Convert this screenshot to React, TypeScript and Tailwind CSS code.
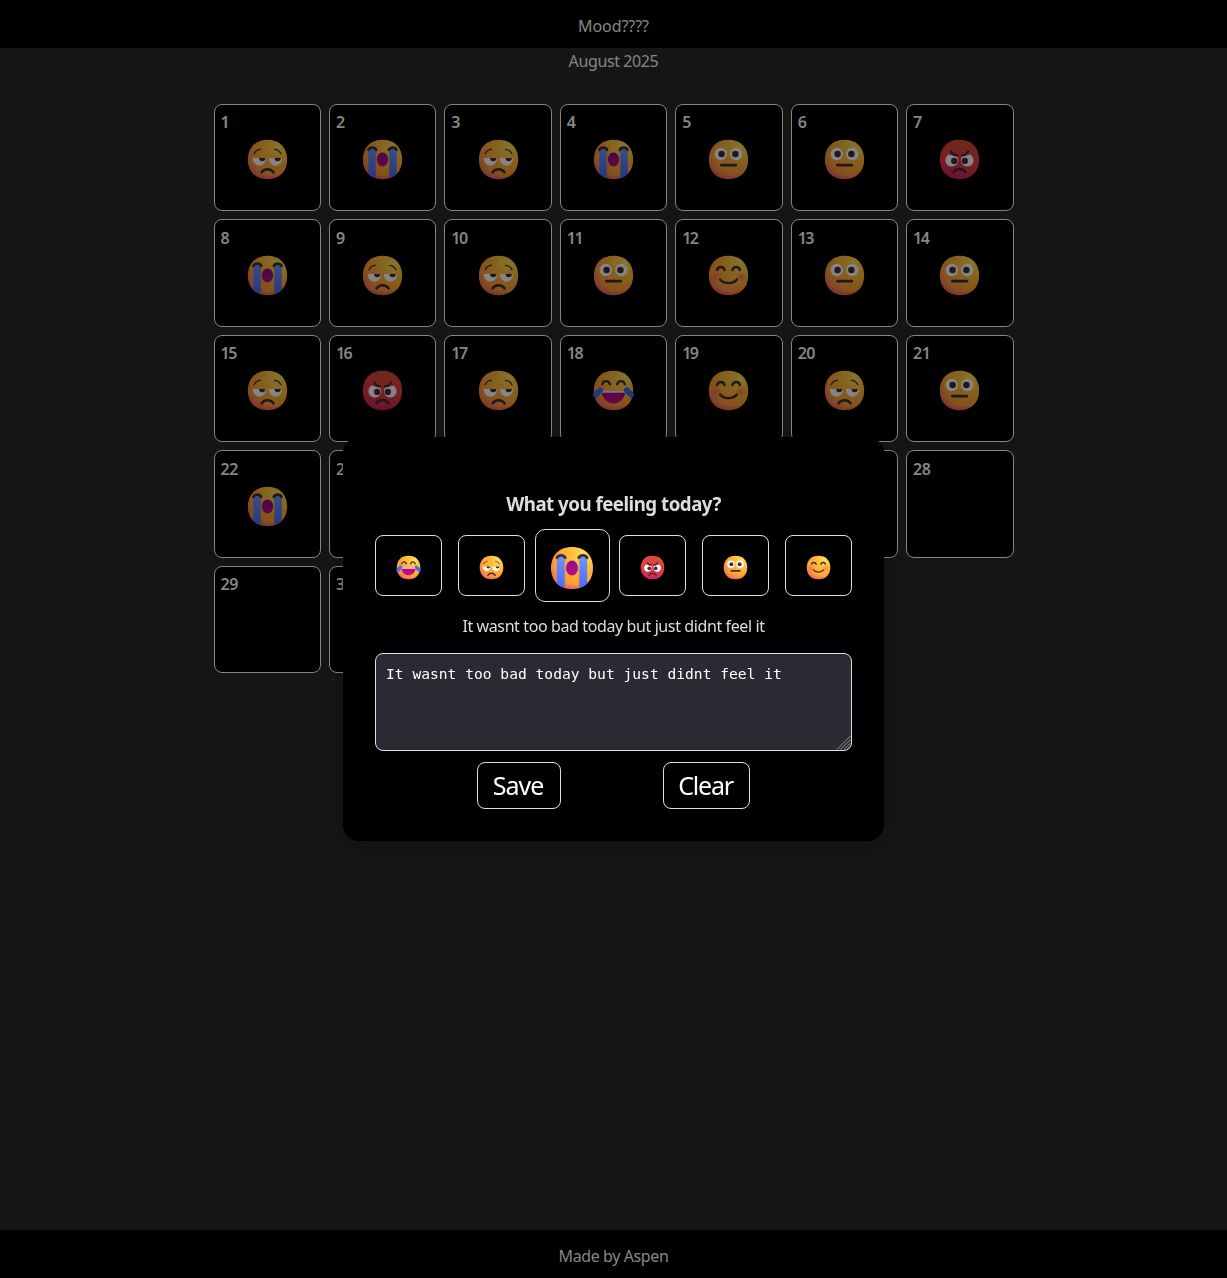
import { useState } from "react";

type Mood = "joy" | "meh" | "cry" | "mad" | "flat" | "happy";

const INK = "#432b3d";
const HEAD = "M16 2C24.6 2 30 7.6 30 16S24.6 30 16 30 2 24.4 2 16 7.4 2 16 2Z";

function Face({ mood, className }: { mood: Mood; className?: string }) {
  const mad = mood === "mad";
  return (
    <svg viewBox="0 0 32 32" className={className} fill="none" strokeLinecap="round" strokeLinejoin="round">
      <defs>
        <radialGradient id="sunny" gradientUnits="userSpaceOnUse" cx="24" cy="7" r="26">
          <stop offset="0" stopColor="#ffe055" />
          <stop offset="0.4" stopColor="#ffbb38" />
          <stop offset="0.8" stopColor="#ff9c36" />
          <stop offset="1" stopColor="#f0745a" />
        </radialGradient>
        <radialGradient id="blush" gradientUnits="userSpaceOnUse" cx="17" cy="6" r="25">
          <stop offset="0.84" stopColor="#e8487c" stopOpacity="0" />
          <stop offset="1" stopColor="#e8487c" stopOpacity="0.75" />
        </radialGradient>
        <linearGradient id="rage" x1="20" y1="2" x2="14" y2="30" gradientUnits="userSpaceOnUse">
          <stop offset="0" stopColor="#d94f35" />
          <stop offset="0.6" stopColor="#e63a44" />
          <stop offset="1" stopColor="#cc2260" />
        </linearGradient>
        <linearGradient id="maw" x1="0" y1="11" x2="0" y2="25" gradientUnits="userSpaceOnUse">
          <stop offset="0" stopColor="#8d0d8b" />
          <stop offset="1" stopColor="#cf0b80" />
        </linearGradient>
        <linearGradient id="stream" x1="0" y1="9" x2="0" y2="30" gradientUnits="userSpaceOnUse">
          <stop offset="0" stopColor="#6c93ff" />
          <stop offset="1" stopColor="#4a68ff" />
        </linearGradient>
        <radialGradient id="cheek">
          <stop offset="0" stopColor="#ff5a50" stopOpacity="0.65" />
          <stop offset="1" stopColor="#ff5a50" stopOpacity="0" />
        </radialGradient>
        <clipPath id="head">
          <path d={HEAD} />
        </clipPath>
      </defs>
      <path d={HEAD} fill={mad ? "url(#rage)" : "url(#sunny)"} />
      {!mad && <path d={HEAD} fill="url(#blush)" />}

      {mood === "meh" && (
        <>
          <path d="M6.5 11.8C7.4 10 9 8.9 11 8.8M25.5 11.8C24.6 10 23 8.9 21 8.8" stroke={INK} strokeWidth="0.9" />
          <path d="M5.5 14.9H15C15 18 12.9 20.3 10.3 20.3S5.5 18 5.5 14.9ZM17 14.9H26.4C26.4 18 24.3 20.3 21.7 20.3S17 18 17 14.9Z" fill="#fff" />
          <path d="M10 14.9H14.5C14.5 16.3 13.5 17.3 12.2 17.3S10 16.3 10 14.9ZM21 14.9H25.5C25.5 16.3 24.5 17.3 23.2 17.3S21 16.3 21 14.9Z" fill={INK} />
          <path d="M11.8 25.2C13.4 22.1 18.6 22.1 20.3 25.2" stroke={INK} strokeWidth="1.8" />
        </>
      )}

      {mood === "cry" && (
        <>
          <g clipPath="url(#head)">
            <path d="M11 10H11.6V30H11ZM20.4 10H21V30H20.4Z" fill="#d86a25" fillOpacity="0.4" />
            <path d="M5.9 8.6H11.1V30H5.9ZM20.9 8.6H26.1V30H20.9Z" fill="url(#stream)" />
          </g>
          <path d="M6 9.1C7 7.1 10.4 7 11.5 9.1M20.5 9.1C21.6 7 25 7.1 26 9.1" stroke={INK} strokeWidth="1.9" />
          <ellipse cx="16" cy="16" rx="4" ry="5" fill="url(#maw)" />
        </>
      )}

      {mood === "flat" && (
        <>
          <circle cx="10.5" cy="12.1" r="4.4" fill="#fff" />
          <circle cx="21.5" cy="12.1" r="4.4" fill="#fff" />
          <circle cx="11.1" cy="12.1" r="2.3" fill={INK} />
          <circle cx="20.9" cy="12.1" r="2.3" fill={INK} />
          <path d="M11 20H21.2" stroke={INK} strokeWidth="1.9" />
        </>
      )}

      {mood === "mad" && (
        <>
          <path d="M8.3 12.4L14.5 14.2C15.8 18 13.6 21 10.6 21 8 21 6 19.1 6 16.6 6 14.8 7 13.2 8.3 12.4ZM23.7 12.4L17.5 14.2C16.2 18 18.4 21 21.4 21 24 21 26 19.1 26 16.6 26 14.8 25 13.2 23.7 12.4Z" fill="#fff" />
          <circle cx="12.2" cy="17" r="2.2" fill={INK} />
          <circle cx="19.8" cy="17" r="2.2" fill={INK} />
          <path d="M10 10.1C10.7 12 12.2 13 14.3 13M22 10.1C21.3 12 19.8 13 17.7 13" stroke={INK} strokeWidth="1.5" />
          <path d="M11.7 25.1C13.4 22 18.6 22 20.3 25.1" stroke={INK} strokeWidth="1.8" />
        </>
      )}

      {mood === "happy" && (
        <>
          <circle cx="7" cy="17" r="4" fill="url(#cheek)" />
          <circle cx="25" cy="17" r="4" fill="url(#cheek)" />
          <path d="M7.9 12.1C8.5 9.3 12.5 9.3 13.2 12.1M18.8 12.1C19.5 9.3 23.5 9.3 24.1 12.1" stroke={INK} strokeWidth="1.7" />
          <path d="M10 18.9C12.5 22.3 19.5 22.3 22 18.9" stroke={INK} strokeWidth="1.7" />
        </>
      )}

      {mood === "joy" && (
        <>
          <path d="M8 11.6C8.6 8.5 12.7 8.5 13.4 11.6M18.6 11.6C19.3 8.5 23.4 8.5 24 11.6" stroke={INK} strokeWidth="1.6" />
          <path d="M7.6 16.2H24.4C24.4 21.5 20.6 25.2 16 25.2S7.6 21.5 7.6 16.2Z" fill="url(#maw)" />
          <path d="M7.6 16H24.4L24.2 17.6H7.8Z" fill="#f3dff0" />
          <path d="M6.6 15.8L3.4 19M25.4 15.8L28.6 19" stroke="#3e6cf2" strokeWidth="4" />
        </>
      )}
    </svg>
  );
}

const entries: Mood[] = [
  "meh", "cry", "meh", "cry", "flat", "flat", "mad",
  "cry", "meh", "meh", "flat", "happy", "flat", "flat",
  "meh", "mad", "meh", "joy", "happy", "meh", "flat",
  "cry",
];
const days = Array.from({ length: 31 }, (_, i) => i + 1);
const choices: Mood[] = ["joy", "meh", "cry", "mad", "flat", "happy"];

export default function App() {
  const [selected, setSelected] = useState<Mood>("cry");
  const [note, setNote] = useState("It wasnt too bad today but just didnt feel it");

  return (
    <div className="flex h-[1278px] flex-col bg-[#242424] font-['Noto_Sans',sans-serif] text-base leading-6 tracking-[-0.39px] text-[#dedede]">
      <header className="flex h-12 shrink-0 items-center justify-center bg-black pt-[3px] tracking-[-0.06px]">Mood????</header>
      <main className="flex flex-1 flex-col items-center">
        <p className="pt-px">August 2025</p>
        <div className="mt-[31px] grid w-[800px] grid-cols-7 gap-2">
          {days.map((d) => (
            <div key={d} className="relative aspect-square rounded-lg border border-[#dedede] bg-black">
              <span
                className={`absolute left-1.5 top-[5.2px] font-semibold ${d > 9 && d < 20 ? "tracking-[-1.5px]" : "tracking-[-0.5px]"}`}
              >
                {d}
              </span>
              <div className="flex h-full items-center justify-center pt-1">
                {entries[d - 1] && <Face mood={entries[d - 1]} className="size-[45px] opacity-[0.87]" />}
              </div>
            </div>
          ))}
        </div>
      </main>
      <footer className="flex h-12 shrink-0 items-center justify-center bg-black pt-[3px]">Made by Aspen</footer>

      <div className="fixed inset-0 flex items-center justify-center bg-black/40">
        <section className="flex h-[404px] w-[541px] flex-col rounded-2xl bg-black px-8 pt-[55px] shadow-[0_4px_20px_rgba(0,0,0,0.2)]">
          <h3 className="text-center text-[18.72px] font-bold leading-6 tracking-[-0.5px]">What you feeling today?</h3>
          <div className="mt-[13px] flex h-[73px] items-center justify-between">
            {choices.map((m) =>
              m === selected ? (
                <button key={m} className="-mx-[6.5px] flex h-[73px] w-[75px] items-center justify-center rounded-[10px] border border-[#dedede] pt-1">
                  <Face mood={m} className="size-[48px]" />
                </button>
              ) : (
                <button key={m} onClick={() => setSelected(m)} className="flex h-[61px] w-[67px] items-center justify-center rounded-lg border border-[#dedede] pt-1">
                  <Face mood={m} className="size-[27px]" />
                </button>
              ),
            )}
          </div>
          <p className="mt-3 text-center">{note}</p>
          <div className="relative mt-[15px] h-[98px] shrink-0">
            <textarea
              value={note}
              onChange={(e) => setNote(e.target.value)}
              className="block size-full resize-none rounded-lg border border-[#dedede] bg-[#2b2a33] px-2.5 py-2.5 font-['DejaVu_Sans_Mono',monospace] text-[14.6px] leading-[19px] tracking-[0.01px] text-white outline-none"
            />
            <svg viewBox="0 0 16 16" className="pointer-events-none absolute bottom-px right-px size-4" stroke="#a9a9ad" strokeWidth="0.8">
              <path d="M2 15.5L15.5 2M5.5 15.5L15.5 5.5M9 15.5L15.5 9M12.5 15L15 12.5" />
            </svg>
          </div>
          <div className="mt-[11px] flex justify-center gap-[102px] text-[25px] text-white">
            <button className="h-[47px] w-[84px] rounded-lg border border-[#dedede] pb-0.5 pr-0.5 tracking-[-1px]">Save</button>
            <button className="h-[47px] w-[87px] rounded-lg border border-[#dedede] pb-0.5 pr-0.5 tracking-[-1.2px]">Clear</button>
          </div>
        </section>
      </div>
    </div>
  );
}
